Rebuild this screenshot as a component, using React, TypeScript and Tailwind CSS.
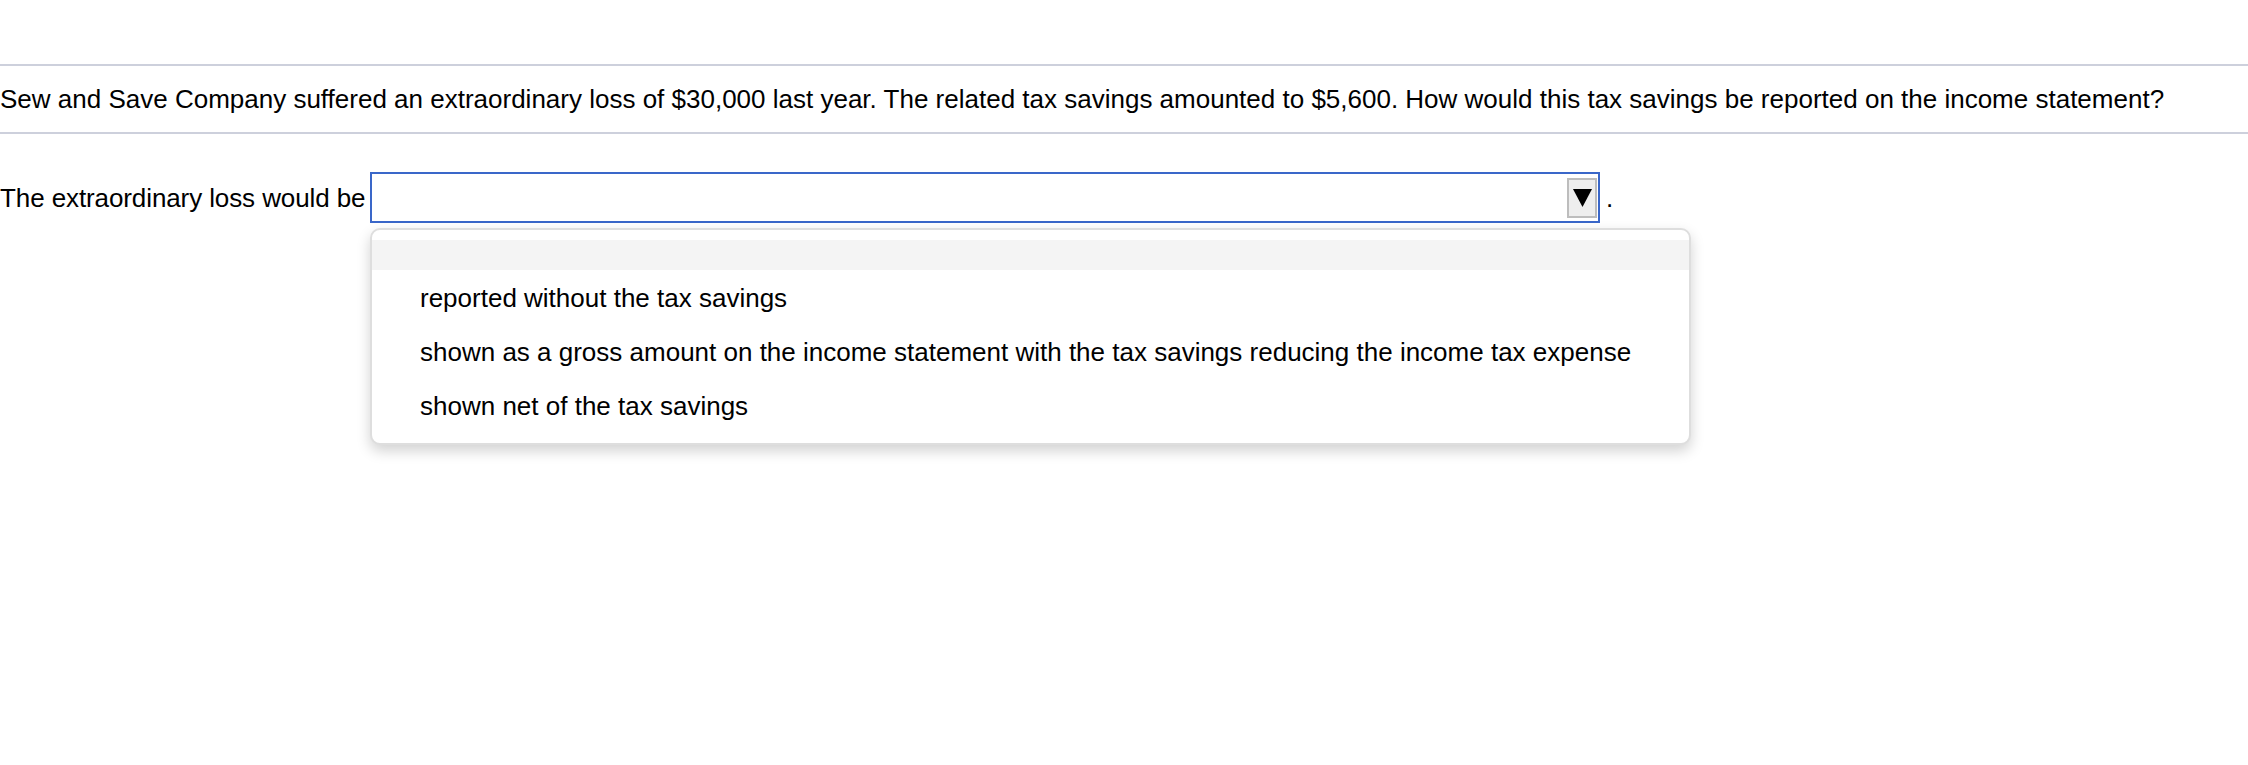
import React from "react";

export default function App() {
  const options = [
    "reported without the tax savings",
    "shown as a gross amount on the income statement with the tax savings reducing the income tax expense",
    "shown net of the tax savings",
  ];
  return (
    <div
      className="w-[2248px] h-[765px] bg-white text-black relative overflow-hidden"
      style={{ fontFamily: '"Liberation Sans", Arial, sans-serif' }}
    >
      <div className="h-[64px]" />
      <div className="border-t-2 border-b-2 border-[#cdd0dc] py-[18px] text-[26px] leading-[30px] whitespace-nowrap">
        Sew and Save Company suffered an extraordinary loss of $30,000 last year. The related tax savings amounted to $5,600. How would this tax savings be reported on the income statement?
      </div>
      <div className="mt-[38px] flex items-center text-[26px] leading-[30px] whitespace-nowrap">
        <span className="w-[370px] shrink-0 tracking-[-0.1px]">The extraordinary loss would be</span>
        <div className="relative">
          <div className="w-[1230px] h-[51px] border-2 border-[#3a67c9] flex items-center justify-end pr-[1px]">
            <div className="w-[30px] h-[40px] bg-[#eeeeee] border-2 border-[#bdbdbd] flex items-center justify-center">
              <svg width="19" height="18" viewBox="0 0 19 18">
                <polygon points="0,0 19,0 9.5,18" fill="#000" />
              </svg>
            </div>
          </div>
          <div className="absolute left-0 top-[56px] w-[1321px] h-[217px] bg-white border-2 border-[#dedede] rounded-[10px] shadow-[0_6px_14px_rgba(0,0,0,0.18)] pt-[10px]">
            <div className="h-[30px] bg-[#f4f4f4]" />
            <div className="pt-[1px]">
              {options.map((o) => (
                <div key={o} className="h-[54px] flex items-center pl-[48px] text-[26px]">
                  {o}
                </div>
              ))}
            </div>
          </div>
        </div>
        <span className="ml-[6px]">.</span>
      </div>
    </div>
  );
}
